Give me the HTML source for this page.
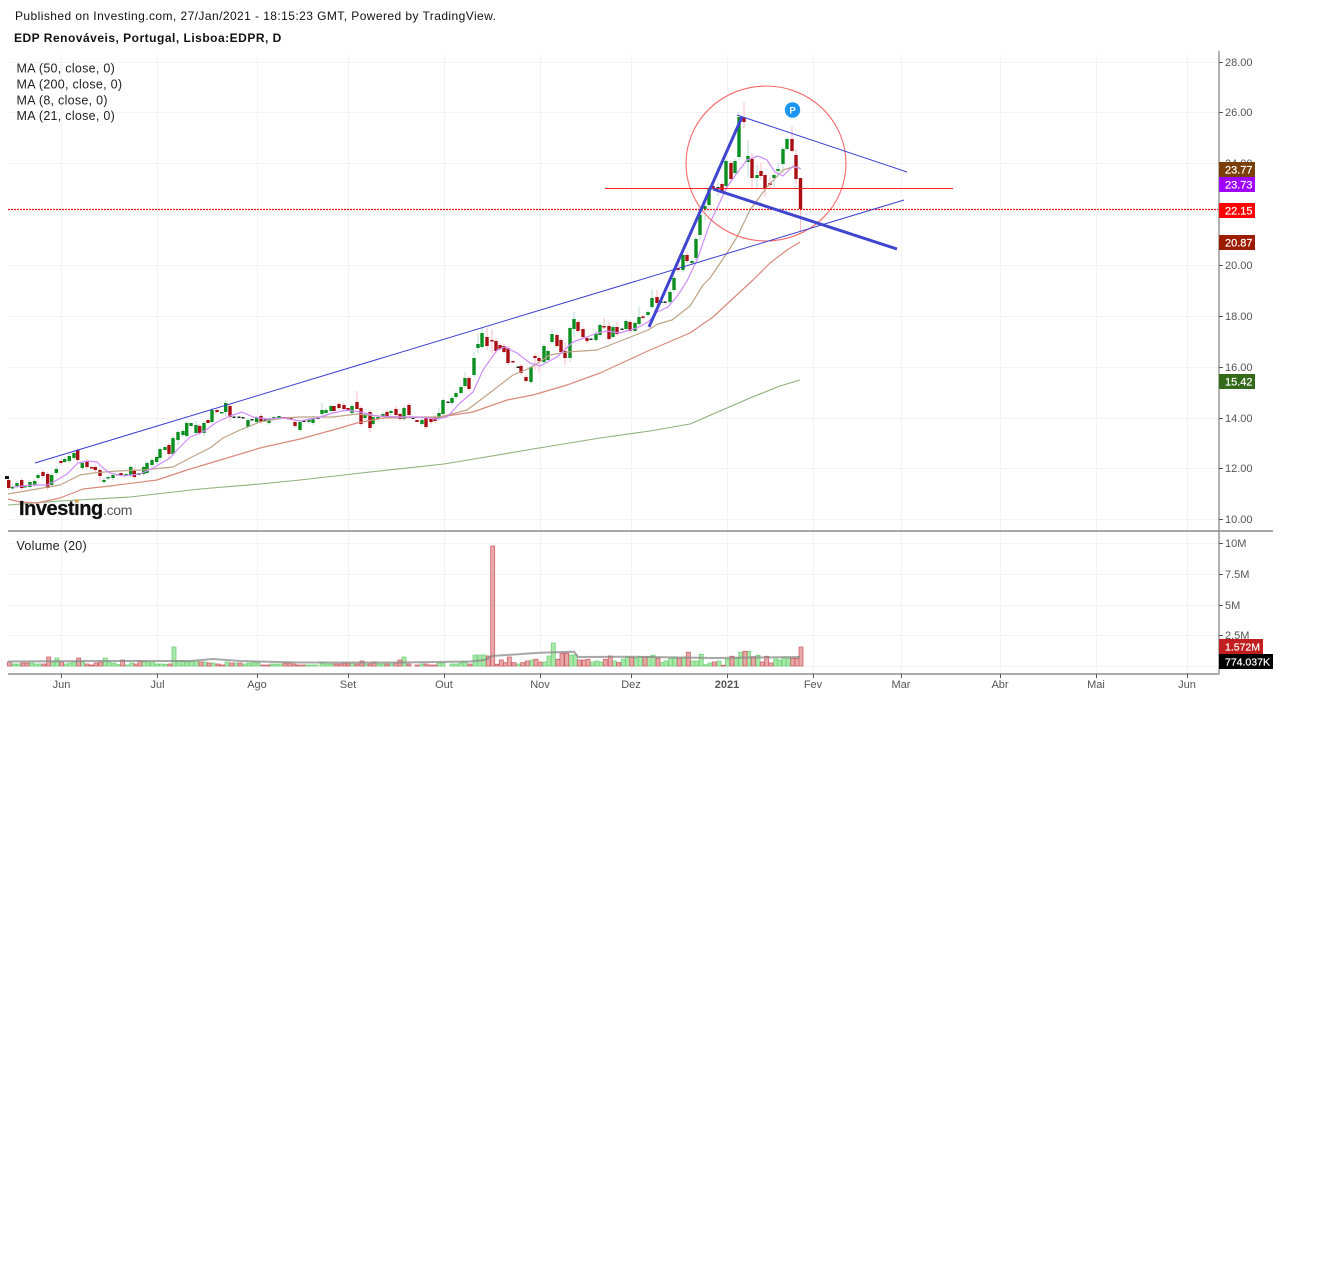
<!DOCTYPE html>
<html><head><meta charset="utf-8"><title>EDPR chart</title>
<style>html,body{margin:0;padding:0;background:#fff}svg{display:block;filter:blur(.3px)}text{font-family:"Liberation Sans",Arial,sans-serif}</style></head>
<body>
<svg width="1333" height="1263" viewBox="0 0 1333 1263" xmlns="http://www.w3.org/2000/svg">
<rect width="1333" height="1263" fill="#fff"/>
<text x="15" y="20" font-size="12" letter-spacing=".43" fill="#111">Published on Investing.com, 27/Jan/2021 - 18:15:23 GMT, Powered by TradingView.</text>
<text x="14" y="42" font-size="12" font-weight="bold" letter-spacing=".5" fill="#111">EDP Renováveis, Portugal, Lisboa:EDPR, D</text>
<!-- grid -->
<path fill="none" stroke="#f3f3f3" d="M61.5 54V674M157.5 54V674M257.5 54V674M348.5 54V674M444.5 54V674M540.5 54V674M631.5 54V674M727.5 54V674M813.5 54V674M901.5 54V674M1000.5 54V674M1096.5 54V674M1187.5 54V674M8 62.5H1219M8 112.5H1219M8 163.5H1219M8 214.5H1219M8 265.5H1219M8 316.5H1219M8 367.5H1219M8 418.5H1219M8 468.5H1219M8 519.5H1219M8 543.5H1219M8 574.5H1219M8 605.5H1219M8 635.5H1219M8 666.5H1219"/>
<!-- wicks -->
<path fill="none" stroke="#bcd8dc" stroke-width="1" d="M12.5 484V490M17 481V488M30 480V489M34.7 479V487M38 473V480M51.7 473V487M56.3 466V475M64.7 457V463M69.3 454V463M74 451V460M82.3 461V470M104 478V484M108 475V480M113 473V480M130.7 465V477M143.7 465V476M147 461V475M152 458V467M156.7 455V464M160 447V460M173 436V456M178 430V445M183 429V437M186.7 421V438M196 421V435M204 421V436M212 408V424M225.7 400V416M248 418V429M256.7 416V424M269 417V425M300 420V432M309 417V424M313 416V425M322 403V416M326 408V415M331 404V413M352 404V415M365 413V420M373 415V426M378 415V421M383 412V419M391 410V416M404 406V421M422 418V426M439 408V421M443 398V416M452 396V405M456 391V399M461 385V395M465 372V388M474 352V377M478 334V353M482 327V349M531 365V384M544 344V364M548 349V362M552 329V344M570 326V362M574 312V337M596 330V342M600 323V337M613 325V339M626 319V331M635 321V333M639 307V326M648 310V317M652 289V309M670 289V304M674 276V292M683 253V272M692 259V265M696 237V260M700 213V240M705 204V220M709 186V210M718 183V196M726 159V188M735 159V175M739 112V160M748 140V177M757 165V188M774 173V188M778 162V177M783 147V174M787 137V151"/>
<path fill="none" stroke="#f7bdc6" stroke-width="1" d="M8.7 478V490M21.7 478V490M43 470V478M47.7 472V490M61 459V465M77.7 448V463M87 459V469M95.3 465V472M100 468V482M134.3 468V479M169 443V458M199.7 424V435M217 408V414M230 404V421M261 414V424M295 419V428M339 402V410M344 403V411M357 391V409M361 406V426M370 410V432M387 410V418M396 406V417M400 412V421M409 403V417M426 416V429M431 417V424M435 415V423M469 376V391M487 328V350M492 329V353M496 338V353M500 343V351M504 344V354M508 346V365M521 364V375M526 375V383M535 353V370M539 356V373M557 333V348M561 338V354M565 342V365M578 320V333M583 327V339M587 336V343M604 318V329M609 322V341M617 322V336M630 320V333M643 315V319M657 290V305M678 265V272M687 252V263M713 184V190M722 182V193M731 161V181M744 102V128M752 153V188M761 163V180M765 173V197M770 177V188M792 126V153M796 149V184M800.5 178V232"/>
<!-- green bodies -->
<path fill="none" stroke="#0b8f1f" stroke-width="3.4" d="M12.5 487V488.5M17 483V486M25 486V487.5M30 482V487M34.7 481V485M38 475V478M51.7 475V485M56.3 469V473M64.7 459V462M69.3 456V461M74 453V458M82.3 463V468M104 480V482M108 477V478.5M113 475V478M117.7 474V475.5M126 474V476M130.7 467V475M139 473V475M143.7 467V474M147 463V473M152 460V465M156.7 457V462M160 449V458M165 447V450M173 438V454M178 432V440M183 431V435M186.7 423V436M191 423V426M196 425V433M204 423V433M212 410V422M221.7 412V413.5M225.7 403V412M248 420V427M256.7 418V422M269 419V423M274 417V419M279 416V418M300 422V430M309 419V422M313 418V423M322 410V414M326 410V413M331 406V411M352 406V413M365 415V418M373 417V424M378 417V419M383 414V417M391 411V413M404 408V419M422 420V424M439 413V419M443 400V414M452 398V403M456 393V397M461 387V393M465 378V386M474 358V375M478 344V348M482 333V347M531 367V382M544 346V362M548 351V360M552 334V342M570 328V358M574 319V329M596 334V340M600 325V335M613 327V337M626 321V329M635 323V331M639 317V324M648 312V315M652 298V307M670 292V302M674 278V290M683 255V270M692 261V263M696 239V258M700 215V235M705 206V209M709 188V205M726 161V186M735 161V173M739 117V157M748 156V162M757 175V178M774 175V178M778 169V171M783 149V164M787 139V149"/>
<!-- red bodies -->
<path fill="none" stroke="#a80e12" stroke-width="3.4" d="M8.7 480V488M21.7 480V488M43 472V476M47.7 474V488M61 461V463M77.7 450V460M87 461V467M91.7 467V468.5M95.3 467V470M100 470V476M121 473V475M134.3 470V477M169 445V454M199.7 426V433M208 420V423M217 410V412M230 406V417M261 416V422M283 417V418.5M287 417V419M291 417V419M295 422V426M334 406V411M339 404V408M344 405V409M348 408V411M357 402V409M361 408V424M370 412V428M387 412V416M396 409V415M400 414V419M409 405V415M417 420V422M426 418V427M431 419V422M435 417V421M469 378V389M487 337V346M492 340V341.5M496 341V351M500 345V349M504 346V352M508 348V363M513 361V362.5M521 366V373M526 377V381M535 356V358M539 358V361M557 335V346M561 340V352M565 351V358M578 322V331M583 329V337M587 338V341M604 326V327.5M609 326V339M617 327V334M630 322V331M643 316.5V318M657 297V303M678 268V270M687 255V261M713 186V188M722 184V191M731 163V179M744 118V122M752 159V178M761 171V176M765 175V188M770 183V185M792 139V151M796 155V179M800.5 178V209"/>
<!-- doji -->
<path fill="none" stroke="#1a2a20" stroke-width="3" d="M234 416.5V418M239 416.5V418M243 417V418.5M252 419V420.5M265 419.5V421M304 420.5V422M318 417.5V419M413 417.5V419M448 401.5V403M518 366.5V368M591 338.5V340M622 328.5V330M661 301.5V303M665 301.5V303M718 187V188.5"/>
<rect x="5" y="476" width="4" height="3" fill="#111"/>
<!-- MAs -->
<g fill="none" stroke-linejoin="round">
<polyline stroke="#8fb07c" stroke-width="1.1" points="8,505 60,501 130,497 200,489 260,484 300,480 370,472 444,464 480,458 533,449 600,438 650,431 690,424 720,411 750,398 780,386 800,380"/>
<polyline stroke="#d98a7c" stroke-width="1.2" points="8,499 20,502 37,503 60,498 83,489 110,486 157,480 187,470 227,458 260,448 300,439 333,430 357,423 383,418 440,417 473,412 507,400 533,395 567,385 600,373 650,350 690,333 713,317 753,280 770,263 787,250 800,242"/>
<polyline stroke="#bfa388" stroke-width="1.2" points="8,494 20,492 37,489 60,485 80,475 93,473 117,471 143,470 173,467 190,458 210,448 223,438 240,430 260,422 283,418 300,417 333,417 357,414 390,417 440,417 467,410 487,395 513,375 530,368 550,355 567,352 597,350 623,340 648,330 658,324 672,320 690,306 703,285 710,278 727,253 737,237 750,210 767,187 783,170 793,167 800,168"/>
<polyline stroke="#cf8dfb" stroke-width="1.2" points="13,487 33,485 47,485 57,480 67,474 78,463 88,461 97,462 103,468 110,473 123,476 140,474 153,468 170,458 177,450 190,437 203,432 217,422 230,416 242,412 253,417 267,419 283,418 300,421 317,418 333,413 347,410 360,412 377,416 400,417 417,417 437,419 447,417 460,403 473,392 483,370 497,350 505,347 517,353 530,363 540,366 557,357 573,342 587,337 597,333 607,331 620,333 637,328 648,322 657,312 668,307 678,295 687,281 697,260 710,223 727,187 737,173 747,160 758,156 767,160 775,172 783,176 793,166 801,169"/>
</g>
<!-- drawings -->
<ellipse cx="766" cy="163.5" rx="80" ry="77.5" fill="none" stroke="#f56a6a" stroke-width="1.1"/>
<path d="M605 188.5H953" stroke="#f22" stroke-width="1.1" fill="none"/>
<path d="M8 209.5H1219" stroke="#f01010" stroke-width="1.2" stroke-dasharray="2 1" fill="none"/>
<path d="M35 463L904 200M737 115L907 172" stroke="#3a3fd0" stroke-width="1" fill="none"/>
<path d="M649 327L742 117M713 189L897 249" stroke="#3f45cf" stroke-width="3" fill="none"/>
<circle cx="792.5" cy="110" r="7.7" fill="#1d96f3"/>
<text x="792.5" y="113.5" font-size="9.5" font-weight="bold" fill="#fff" text-anchor="middle">P</text>
<!-- logo -->
<text x="19" y="515" font-size="20" font-weight="bold" letter-spacing="-.45" fill="#111" stroke="#111" stroke-width=".3">Investing</text>
<text x="103" y="515" font-size="14" fill="#555" letter-spacing="-.3">.com</text>
<circle cx="77" cy="501" r="1.4" fill="#f5a623"/>
<!-- MA labels -->
<g font-size="12.5" fill="#222" letter-spacing=".28">
<text x="16.500" y="72.500">MA (50, close, 0)</text>
<text x="16.500" y="88.500">MA (200, close, 0)</text>
<text x="16.500" y="104.500">MA (8, close, 0)</text>
<text x="16.500" y="120">MA (21, close, 0)</text>
<text x="16.500" y="550">Volume (20)</text>
</g>
<!-- volume -->
<path fill="#8ee08e" fill-opacity=".75" stroke="#6fd27a" stroke-width=".8" d="M12 664h4V666h-4zM16.700 664h4V666h-4zM29.700 663h4V666h-4zM34 664h4V666h-4zM38 664h4V666h-4zM50.700 662h4V666h-4zM55 658h4V666h-4zM63.700 664h4V666h-4zM68 663h4V666h-4zM72 662h4V666h-4zM80.700 662h4V666h-4zM103.300 658h4V666h-4zM107 662h4V666h-4zM112 663h4V666h-4zM116 664.700h4V666h-4zM125 665h4V666h-4zM129.700 663h4V666h-4zM142 661.700h4V666h-4zM146 662h4V666h-4zM150.700 662.700h4V666h-4zM155 664h4V666h-4zM159.700 664h4V666h-4zM164 664.300h4V666h-4zM172 647h4V666h-4zM177 661h4V666h-4zM181 661h4V666h-4zM184.700 662h4V666h-4zM189.700 661h4V666h-4zM194.700 661h4V666h-4zM203 662h4V666h-4zM211 663h4V666h-4zM225 662h4V666h-4zM234 663h4V666h-4zM243 664h4V666h-4zM247 663h4V666h-4zM252 662h4V666h-4zM256 663h4V666h-4zM270 664h4V666h-4zM274 664h4V666h-4zM279 664h4V666h-4zM305 665h4V666h-4zM309 665h4V666h-4zM314 665h4V666h-4zM320 662h4V666h-4zM325 664h4V666h-4zM329 664h4V666h-4zM350 663h4V666h-4zM363 664h4V666h-4zM376 664h4V666h-4zM381 664h4V666h-4zM389 664h4V666h-4zM402 657h4V666h-4zM420 664h4V666h-4zM437 663h4V666h-4zM441 663h4V666h-4zM450 664h4V666h-4zM454 664h4V666h-4zM459 663h4V666h-4zM463 661.700h4V666h-4zM473 655h4V666h-4zM478 655h4V666h-4zM482 655h4V666h-4zM517 664h4V666h-4zM530 660h4V666h-4zM543 662h4V666h-4zM547 656h4V666h-4zM551.300 643h4V666h-4zM569 655h4V666h-4zM573.300 655h4V666h-4zM590.700 662h4V666h-4zM595 661h4V666h-4zM599 662h4V666h-4zM612.300 661h4V666h-4zM621.300 659h4V666h-4zM625.700 656.700h4V666h-4zM634 658.300h4V666h-4zM638.300 656.700h4V666h-4zM647 656.700h4V666h-4zM651 655.300h4V666h-4zM660 662.700h4V666h-4zM664 661h4V666h-4zM668.700 658.300h4V666h-4zM673 657.300h4V666h-4zM682 657.700h4V666h-4zM690.700 661h4V666h-4zM694.700 661h4V666h-4zM699.300 654.300h4V666h-4zM704 664.700h4V666h-4zM708 663h4V666h-4zM717 661h4V666h-4zM725.300 659.300h4V666h-4zM734 657.700h4V666h-4zM738.700 652.300h4V666h-4zM746.700 651.300h4V666h-4zM756 655.300h4V666h-4zM773.700 659h4V666h-4zM777.300 660h4V666h-4zM782 657.300h4V666h-4zM786.300 658h4V666h-4z"/>
<path fill="#e08c8c" fill-opacity=".75" stroke="#cc6068" stroke-width=".8" d="M7.300 662h4V666h-4zM21 663h4V666h-4zM25 663h4V666h-4zM42 664h4V666h-4zM46.700 657h4V666h-4zM59.700 662h4V666h-4zM76.700 658h4V666h-4zM85 664h4V666h-4zM89.700 665h4V666h-4zM94 663h4V666h-4zM98.700 662h4V666h-4zM120.700 660h4V666h-4zM134 664h4V666h-4zM138 661h4V666h-4zM168 664h4V666h-4zM199 662h4V666h-4zM207 663h4V666h-4zM216 664h4V666h-4zM220.700 665h4V666h-4zM229.700 663h4V666h-4zM238 663h4V666h-4zM261 665h4V666h-4zM266 665h4V666h-4zM283 663h4V666h-4zM288 663h4V666h-4zM292 664h4V666h-4zM296 665h4V666h-4zM301 665h4V666h-4zM334 664h4V666h-4zM339 664h4V666h-4zM343 663h4V666h-4zM346 663h4V666h-4zM355 664h4V666h-4zM360 661h4V666h-4zM368 664h4V666h-4zM372 662h4V666h-4zM385 664h4V666h-4zM394 663h4V666h-4zM398 660h4V666h-4zM407 664h4V666h-4zM415 665h4V666h-4zM424 664h4V666h-4zM429 665h4V666h-4zM433 665h4V666h-4zM468 664h4V666h-4zM486.300 656h4V666h-4zM490.700 546h4V666h-4zM494.700 664.300h4V666h-4zM499.300 660h4V666h-4zM503.300 662.700h4V666h-4zM507.300 657h4V666h-4zM512 662.700h4V666h-4zM520.700 662.700h4V666h-4zM525.300 661h4V666h-4zM534 659.300h4V666h-4zM538 662h4V666h-4zM556 659.300h4V666h-4zM560 653.300h4V666h-4zM564.700 653.300h4V666h-4zM577.300 660h4V666h-4zM582 660h4V666h-4zM586 659.300h4V666h-4zM603.300 659.300h4V666h-4zM608.300 656h4V666h-4zM616.700 662.700h4V666h-4zM629.700 657.300h4V666h-4zM643 657h4V666h-4zM656 658.300h4V666h-4zM677.300 658.300h4V666h-4zM686.300 652.300h4V666h-4zM712.300 662h4V666h-4zM721.300 665.300h4V666h-4zM730 656.300h4V666h-4zM743 651.300h4V666h-4zM751.300 656.700h4V666h-4zM760.300 662h4V666h-4zM764.700 656.300h4V666h-4zM769 663h4V666h-4zM790.700 658.300h4V666h-4zM795 658.300h4V666h-4zM799 647h4V666h-4z"/>
<polyline fill="none" stroke="#8a8a8a" stroke-opacity=".75" stroke-width="2" points="8,661.500 100,661 190,661 213,659 240,661 300,662.500 400,662.500 470,661.500 485,660 492,656 540,652.700 574,651.700 578,657 627,656.700 713,658 800,657"/>
<!-- axes -->
<path d="M8 531H1273" stroke="#8a8a8a" stroke-width="1.500" fill="none"/>
<path d="M8 674H1219.500" stroke="#777" stroke-width="1.200" fill="none"/>
<path d="M1219 51V674.500" stroke="#999" stroke-width="1.500" fill="none"/>
<path stroke="#555" fill="none" d="M1219 62.500h4M1219 112.500h4M1219 163.500h4M1219 265.500h4M1219 316.500h4M1219 367.500h4M1219 418.500h4M1219 468.500h4M1219 519.500h4M1219 543.500h4M1219 574.500h4M1219 605.500h4M1219 635.500h4M61.500 674v4M157.500 674v4M257.500 674v4M348.500 674v4M444.500 674v4M540.500 674v4M631.500 674v4M727.500 674v4M813.500 674v4M901.500 674v4M1000.500 674v4M1096.500 674v4M1187.500 674v4"/>
<g font-size="11" fill="#555">
<text x="1225" y="66">28.00</text><text x="1225" y="116">26.00</text><text x="1225" y="167">24.00</text><text x="1225" y="269">20.00</text><text x="1225" y="320">18.00</text><text x="1225" y="371">16.00</text><text x="1225" y="422">14.00</text><text x="1225" y="472">12.00</text><text x="1225" y="523">10.00</text>
<text x="1225" y="547">10M</text><text x="1225" y="578">7.5M</text><text x="1225" y="609">5M</text><text x="1225" y="639">2.5M</text>
</g>
<g font-size="11" fill="#555" text-anchor="middle">
<text x="61.500" y="688">Jun</text><text x="157.500" y="688">Jul</text><text x="257" y="688">Ago</text><text x="348" y="688">Set</text><text x="444" y="688">Out</text><text x="540" y="688">Nov</text><text x="631" y="688">Dez</text><text x="727" y="688" font-weight="bold">2021</text><text x="813" y="688">Fev</text><text x="901" y="688">Mar</text><text x="1000" y="688">Abr</text><text x="1096" y="688">Mai</text><text x="1187" y="688">Jun</text>
</g>
<!-- badges -->
<rect x="1219" y="162" width="36" height="15" fill="#7a3f08"/>
<rect x="1219" y="177" width="36" height="15" fill="#a000ff"/>
<rect x="1219" y="203" width="36" height="15" fill="#ff0000"/>
<rect x="1219" y="235" width="36" height="15" fill="#9c1c02"/>
<rect x="1219" y="374" width="36" height="15" fill="#33691a"/>
<rect x="1219" y="639" width="44" height="15" fill="#c11f1f"/>
<rect x="1219" y="654" width="54" height="15" fill="#000"/>
<g font-size="11" fill="#fff" stroke="#fff" stroke-width=".2">
<text x="1225" y="173.500">23.77</text><text x="1225" y="188.500">23.73</text><text x="1225" y="214.500">22.15</text><text x="1225" y="246.500">20.87</text><text x="1225" y="385.500">15.42</text>
<text x="1225" y="650.500" font-size="10.500">1.572M</text><text x="1225" y="665.500" font-size="10.500">774.037K</text>
</g>
</svg>
</body></html>
